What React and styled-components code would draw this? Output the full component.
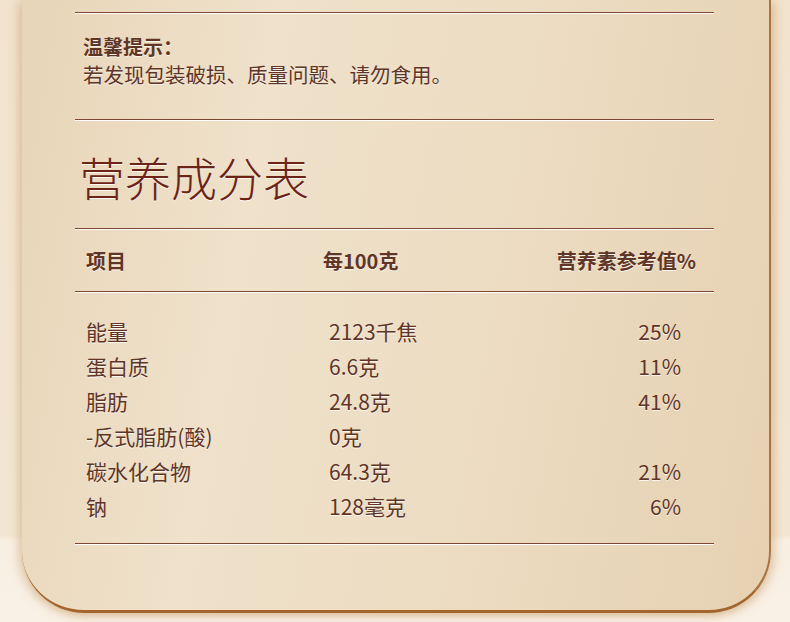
import React from "react";
import styled, { createGlobalStyle } from "styled-components";

const GlobalStyle = createGlobalStyle`
  html, body {
    margin: 0;
    padding: 0;
    background: #f2e5d1;
  }
  body {
    font-family: "Noto Sans CJK SC", "Noto Sans", sans-serif;
  }
`;

const Page = styled.div`
  width: 790px;
  height: 622px;
  overflow: hidden;
  background: linear-gradient(180deg, #f1e3ce 0%, #f2e6d3 86%, #f8efe3 87%, #f9f1e6 100%);
`;

const Card = styled.div`
  box-sizing: border-box;
  margin-left: 22px;
  width: 749px;
  height: 613px;
  padding: 12px 55px 0 53px;
  background: linear-gradient(100deg, #e8d5b8 0%, #efe1ca 30%, #ecdcc2 62%, #e6d1b2 100%);
  border-right: 2px solid #ad7440;
  border-bottom: 3px solid #a4662c;
  border-radius: 0 0 62px 62px;
  box-shadow: -4px 2px 10px rgba(190, 140, 80, 0.35), 4px 2px 10px rgba(190, 140, 80, 0.35);
`;

const Divider = styled.div`
  height: 1px;
  background: #7b4632;
  box-shadow: 0 1px 0 rgba(255, 255, 255, 0.95);
`;

const Notice = styled.div`
  padding: 21px 0 31px 8px;
  font-size: 20.5px;
  line-height: 28px;
  color: #5f3526;
  text-shadow: 0 1px 0 rgba(255, 255, 255, 0.7);
`;

const NoticeTitle = styled.div`
  font-size: 20px;
  line-height: 26px;
  font-weight: 700;
`;

const Title = styled.h1`
  margin: 26px 0 22px 4px;
  font-size: 46px;
  line-height: 60px;
  font-weight: 300;
  color: #6b2416;
  text-shadow: 0 1px 0 rgba(255, 255, 255, 0.8);
`;

const Row = styled.div`
  display: grid;
  grid-template-columns: 237px 1fr auto;
  align-items: center;
  padding: 0 ${(p) => (p.$head ? 18 : 33)}px 0 11px;
  height: ${(p) => (p.$head ? 62 : 35)}px;
  font-size: ${(p) => (p.$head ? 20 : 21)}px;
  font-weight: ${(p) => (p.$head ? 700 : 400)};
  color: #5f3526;
  text-shadow: 0 1px 0 rgba(255, 255, 255, 0.75);
`;

const Cell = styled.span`
  padding-left: ${(p) => p.$shift || 0}px;
  text-align: ${(p) => (p.$right ? "right" : "left")};
  white-space: nowrap;
`;

const Body = styled.div`
  padding: 21px 0 20px;
`;

const rows = [
  ["能量", "2123千焦", "25%"],
  ["蛋白质", "6.6克", "11%"],
  ["脂肪", "24.8克", "41%"],
  ["-反式脂肪(酸)", "0克", ""],
  ["碳水化合物", "64.3克", "21%"],
  ["钠", "128毫克", "6%"],
];

export default function App() {
  return (
    <Page>
      <GlobalStyle />
      <Card>
        <Divider />
        <Notice>
          <NoticeTitle>温馨提示：</NoticeTitle>
          <div>若发现包装破损、质量问题、请勿食用。</div>
        </Notice>
        <Divider />
        <Title>营养成分表</Title>
        <Divider />
        <Row $head>
          <Cell>项目</Cell>
          <Cell>每100克</Cell>
          <Cell $right>营养素参考值%</Cell>
        </Row>
        <Divider />
        <Body>
          {rows.map((r) => (
            <Row key={r[0]}>
              <Cell>{r[0]}</Cell>
              <Cell $shift={6}>{r[1]}</Cell>
              <Cell $right>{r[2]}</Cell>
            </Row>
          ))}
        </Body>
        <Divider />
      </Card>
    </Page>
  );
}
